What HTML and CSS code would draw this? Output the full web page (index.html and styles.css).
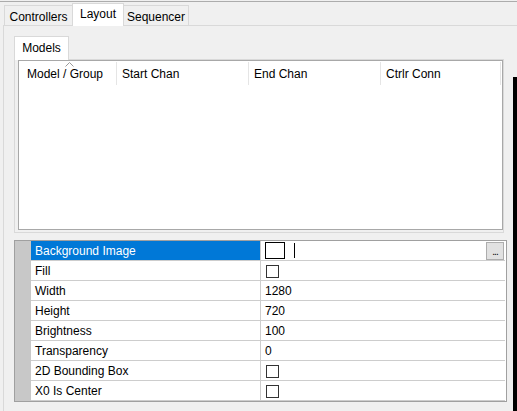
FILE: index.html
```html
<!DOCTYPE html>
<html>
<head>
<meta charset="utf-8">
<link rel="stylesheet" href="styles.css">
</head>
<body>
<div class="app">
  <div class="tabs">
    <div class="tab t-ctrl">Controllers</div>
    <div class="tab t-layout sel">Layout</div>
    <div class="tab t-seq">Sequencer</div>
  </div>
  <div class="panel">
    <div class="main">
      <div class="nb">
        <div class="nbtabs"><div class="nbtab">Models</div></div>
        <div class="page">
          <div class="list">
            <div class="hdr">
              <div class="col c1">Model / Group
                <svg class="sort" width="9" height="5" viewBox="0 0 9 5"><polyline points="0.5,4.5 4.5,0.5 8.5,4.5" fill="none" stroke="#9a9a9a" stroke-width="1"/></svg>
              </div>
              <div class="col c2">Start Chan</div>
              <div class="col c3">End Chan</div>
              <div class="col c4">Ctrlr Conn</div>
            </div>
          </div>
        </div>
      </div>
      <div class="grid">
        <div class="gmargin"></div>
        <div class="rows">
          <div class="row sel">
            <div class="lbl">Background Image</div>
            <div class="val">
              <span class="colorbox"></span><span class="caret"></span>
              <span class="dots">...</span>
            </div>
          </div>
          <div class="row"><div class="lbl">Fill</div><div class="val"><span class="chk"></span></div></div>
          <div class="row"><div class="lbl">Width</div><div class="val">1280</div></div>
          <div class="row"><div class="lbl">Height</div><div class="val">720</div></div>
          <div class="row"><div class="lbl">Brightness</div><div class="val">100</div></div>
          <div class="row"><div class="lbl">Transparency</div><div class="val">0</div></div>
          <div class="row"><div class="lbl">2D Bounding Box</div><div class="val"><span class="chk"></span></div></div>
          <div class="row"><div class="lbl">X0 Is Center</div><div class="val"><span class="chk"></span></div></div>
        </div>
      </div>
    </div>
    <div class="sash"></div>
  </div>
</div>
</body>
</html>
```
FILE: styles.css
```css
* { box-sizing: border-box; }
html, body { margin: 0; padding: 0; }
body {
  background: #f0f0f0;
  font-family: "Liberation Sans", Arial, sans-serif;
  font-size: 12px;
  color: #000;
}
.app {
  width: 517px;
  height: 411px;
  overflow: hidden;
  padding-top: 1px;
  display: flex;
  flex-direction: column;
}
.tabs {
  display: flex;
  align-items: flex-end;
  height: 24px;
  border-top: 1px solid #acacac;
  padding-left: 4px;
}
.tab {
  height: 20px;
  border: 1px solid #d9d9d9;
  border-bottom: none;
  background: #f0f0f0;
  text-align: center;
  line-height: 14px;
  padding-top: 4px;
}
.t-ctrl { width: 69px; }
.t-layout { width: 52px; margin-left: -1px; }
.t-seq { width: 66px; margin-left: -1px; }
.tab.sel {
  height: 23px;
  margin-bottom: -1px;
  background: #fff;
  position: relative;
  z-index: 1;
  padding-top: 3px;
}
.panel {
  flex: 1;
  margin-left: 3px;
  border-top: 1px solid #d9d9d9;
  border-left: 1px solid #d9d9d9;
  display: flex;
}
.main {
  width: 509px;
  padding: 10px 0 0 10px;
}
.sash {
  width: 4px;
  margin-top: 51px;
  background: #000;
}
.nbtabs {
  display: flex;
  height: 23px;
  align-items: flex-end;
}
.nbtab {
  width: 55px;
  height: 24px;
  margin-bottom: -1px;
  border: 1px solid #d9d9d9;
  border-bottom: none;
  background: #fff;
  text-align: center;
  line-height: 14px;
  padding-top: 4px;
  position: relative;
  z-index: 1;
}
.page {
  width: 490px;
  height: 174px;
  border: 1px solid #d9d9d9;
  padding: 0 0 2px 3px;
  display: flex;
}
.list {
  flex: 1;
  border: 1px solid #a8a8a8;
  background: #fff;
}
.hdr {
  display: flex;
  height: 25px;
  padding-top: 1px;
}
.col {
  height: 23px;
  border-right: 1px solid #e5e5e5;
  line-height: 14px;
  padding-top: 5px;
  padding-left: 5px;
  position: relative;
  white-space: nowrap;
}
.c1 { width: 98px; padding-left: 8px; }
.c2 { width: 132px; }
.c3 { width: 132px; }
.c4 { width: 120px; }
.sort {
  position: absolute;
  left: 46px;
  top: 0;
}
.grid {
  margin-top: 7px;
  width: 493px;
  height: 162px;
  border: 1px solid #a0a0a0;
  display: flex;
  background: #fff;
}
.gmargin {
  width: 16px;
  background: #c8c8c8;
}
.rows {
  flex: 1;
}
.row {
  display: flex;
  height: 20px;
  border-bottom: 1px solid #cdcdcd;
  margin-right: 1px;
}
.lbl {
  width: 230px;
  border-right: 1px solid #cdcdcd;
  line-height: 18px;
  padding-top: 1px;
  padding-left: 4px;
  white-space: nowrap;
}
.row.sel .lbl {
  background: #0078d7;
  color: #fff;
}
.val {
  flex: 1;
  line-height: 18px;
  padding-top: 1px;
  padding-left: 4px;
  display: flex;
  align-items: flex-start;
}
.chk {
  width: 13px;
  height: 13px;
  border: 1px solid #333;
  margin-top: 3px;
  margin-left: 1px;
}
.colorbox {
  width: 20px;
  height: 17px;
  border: 1px solid #000;
  margin-top: 0;
}
.caret {
  width: 1px;
  height: 15px;
  background: #000;
  margin-top: 1px;
  margin-left: 9px;
}
.dots {
  margin-left: auto;
  width: 18px;
  height: 18px;
  margin-top: 0;
  margin-right: 1px;
  background: #e1e1e1;
  border: 1px solid #adadad;
  font-size: 10px;
  line-height: 18px;
  text-align: center;
  letter-spacing: -1px;
}
```
